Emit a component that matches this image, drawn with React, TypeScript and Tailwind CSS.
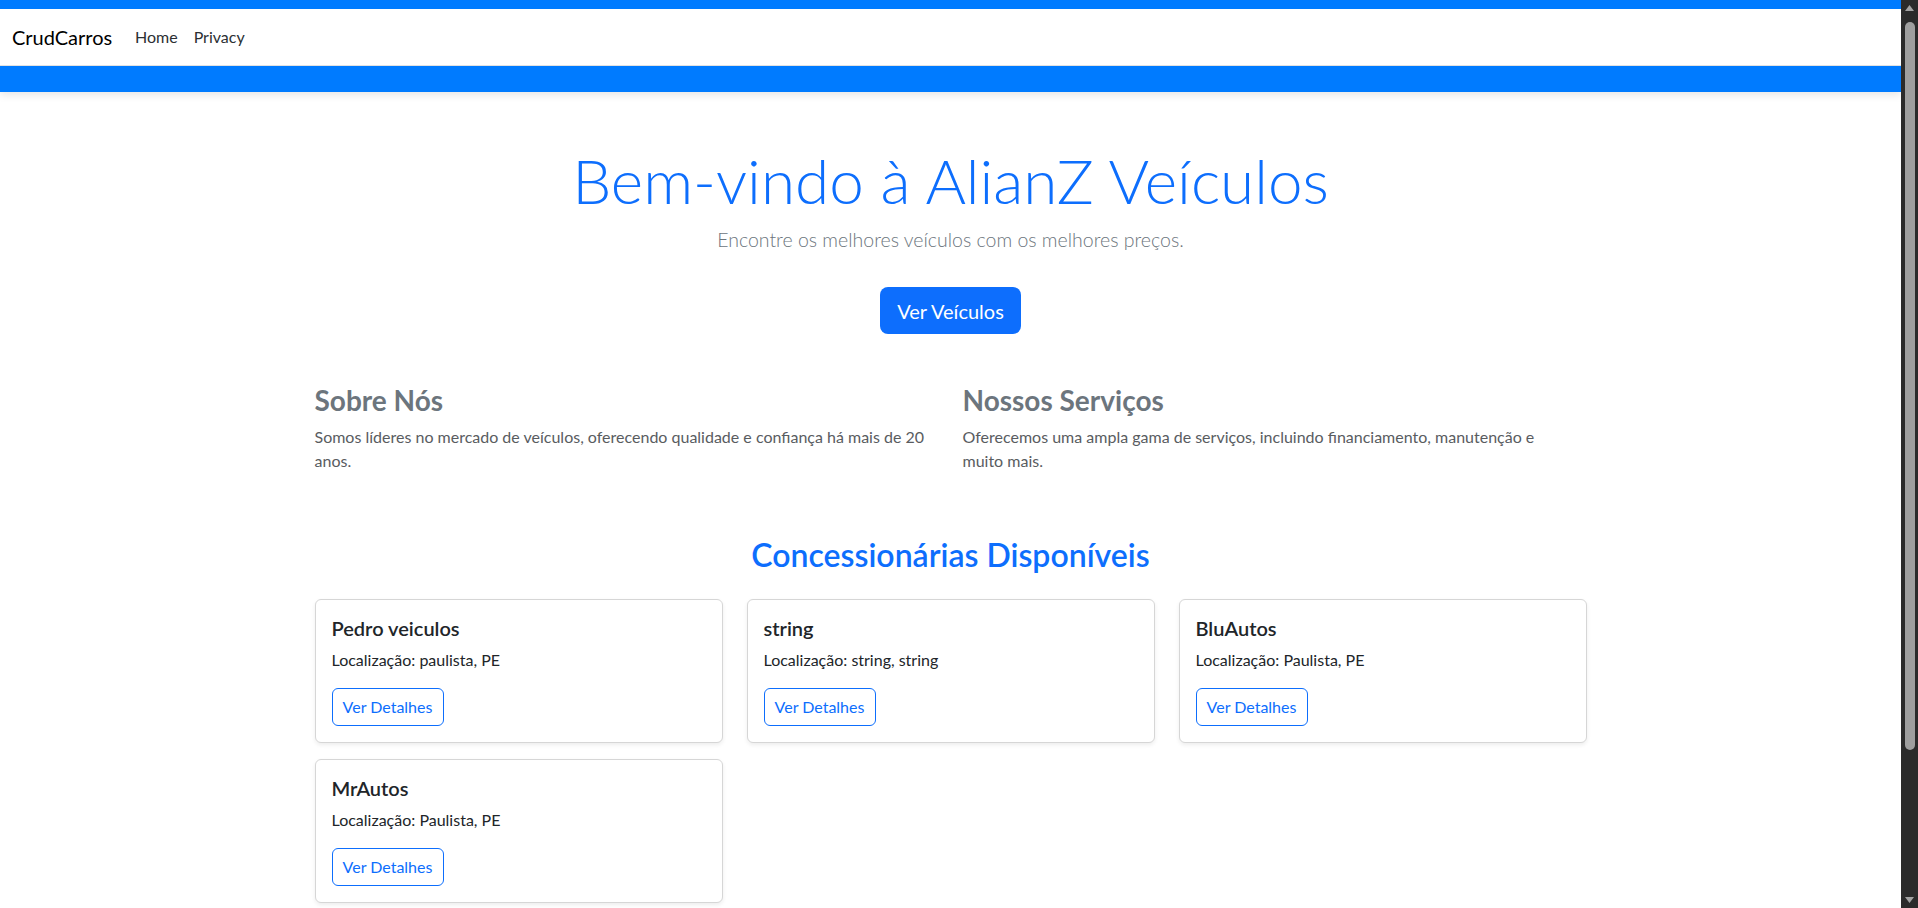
const dealers = [
  { name: "Pedro veiculos", location: "paulista, PE" },
  { name: "string", location: "string, string" },
  { name: "BluAutos", location: "Paulista, PE" },
  { name: "MrAutos", location: "Paulista, PE" },
];

function Navbar() {
  return (
    <header className="relative z-10 shadow-[0_3px_8px_rgba(0,0,0,0.1)]">
      <div className="h-[9px] bg-[#007bff]" />
      <nav className="flex h-[57px] items-center border-b border-[#e2e2e2] bg-white pl-[12px] pb-px">
        <a className="w-[99px] text-[20px] leading-[30px] text-black">CrudCarros</a>
        <ul className="ml-[16px] flex items-center">
          <li>
            <a className="block px-2 text-[16px] leading-[24px] text-[#2b2f33]">Home</a>
          </li>
          <li>
            <a className="block px-2 text-[16px] leading-[24px] text-[#2b2f33]">Privacy</a>
          </li>
        </ul>
      </nav>
      <div className="h-[26px] bg-[#007bff]" />
    </header>
  );
}

function DealerCard({ name, location }: { name: string; location: string }) {
  return (
    <div className="rounded-[6px] border border-[#d6d6d6] bg-white p-4 shadow-[0_2px_4px_rgba(0,0,0,0.075)]">
      <h5 className="mb-2 text-[20px] font-semibold leading-[24px] text-[#212529]">{name}</h5>
      <p className="mb-4 text-[16px] leading-[24px] text-[#212529]">Localização: {location}</p>
      <button className="h-[38px] w-[112px] rounded-[6px] border border-[#0d6efd] text-[16px] leading-[24px] text-[#0d6efd]">
        Ver Detalhes
      </button>
    </div>
  );
}

function Scrollbar() {
  return (
    <div className="flex h-full w-[17px] shrink-0 flex-col items-center bg-[#2b2b2b] pt-[5px] pb-[5px]">
      <svg width="9" height="6" viewBox="0 0 9 6">
        <path d="M4.5 0 L9 6 L0 6 Z" fill="#a3a3a3" />
      </svg>
      <div className="mt-[11px] h-[728px] w-[10px] rounded-full bg-[#9f9f9f]" />
      <div className="flex-1" />
      <svg width="9" height="6" viewBox="0 0 9 6">
        <path d="M0 0 L9 0 L4.5 6 Z" fill="#a3a3a3" />
      </svg>
    </div>
  );
}

export default function App() {
  return (
    <div className="flex h-[908px] w-full overflow-hidden bg-white font-[Lato,sans-serif]">
      <div className="flex h-full min-w-0 flex-1 flex-col overflow-hidden">
        <Navbar />
        <main className="mx-auto w-[1272px] pt-[51px]">
          <section className="flex flex-col items-center text-center">
            <h1 className="text-[62px] font-light leading-[74px] text-[#0d6efd]">Bem-vindo à AlianZ Veículos</h1>
            <p className="mt-[8px] text-[19.5px] font-light leading-[30px] text-[#6c757d]">
              Encontre os melhores veículos com os melhores preços.
            </p>
            <button className="mt-[32px] h-[47px] w-[141px] rounded-[8px] bg-[#0d6efd] text-[20px] leading-[30px] text-white">
              Ver Veículos
            </button>
          </section>

          <section className="mt-[49px] grid grid-cols-2 gap-x-6">
            <div>
              <h3 className="mb-2 text-[28px] font-bold leading-[34px] text-[#6c757d]">Sobre Nós</h3>
              <p className="text-[16px] leading-[24px] text-[#595c5f]">
                Somos líderes no mercado de veículos, oferecendo qualidade e confiança há mais de 20 anos.
              </p>
            </div>
            <div>
              <h3 className="mb-2 text-[28px] font-bold leading-[34px] text-[#6c757d]">Nossos Serviços</h3>
              <p className="text-[16px] leading-[24px] text-[#595c5f]">
                Oferecemos uma ampla gama de serviços, incluindo financiamento, manutenção e
                <br />
                muito mais.
              </p>
            </div>
          </section>

          <section className="mt-[63px]">
            <h2 className="text-center text-[32px] font-semibold leading-[38px] text-[#0d6efd]">
              Concessionárias Disponíveis
            </h2>
            <div className="mt-[25px] grid grid-cols-3 gap-x-6 gap-y-[16px]">
              {dealers.map((d) => (
                <DealerCard key={d.name} name={d.name} location={d.location} />
              ))}
            </div>
          </section>
        </main>
      </div>
      <Scrollbar />
    </div>
  );
}
